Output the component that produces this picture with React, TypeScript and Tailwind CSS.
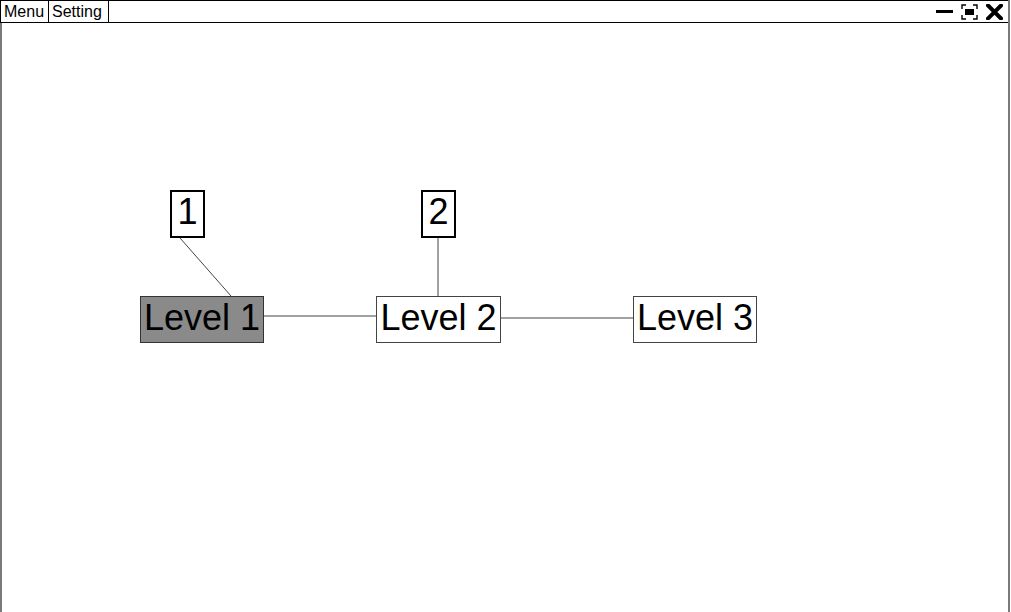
import React from 'react';

type Node = { id: string; label: string; x: number; y: number; w: number; h: number; active?: boolean };

const nodes: Node[] = [
  { id: 'n1', label: '1', x: 170, y: 190, w: 35, h: 48 },
  { id: 'n2', label: '2', x: 421, y: 190, w: 35, h: 48 },
  { id: 'l1', label: 'Level 1', x: 140, y: 296, w: 124, h: 47, active: true },
  { id: 'l2', label: 'Level 2', x: 376, y: 296, w: 125, h: 47 },
  { id: 'l3', label: 'Level 3', x: 633, y: 296, w: 124, h: 47 },
];

const edges = [
  { x1: 264, y1: 316, x2: 376, y2: 316 },
  { x1: 501, y1: 318, x2: 633, y2: 318 },
  { x1: 180, y1: 238, x2: 231, y2: 296 },
  { x1: 438, y1: 238, x2: 438, y2: 296 },
];

const WindowControls = () => (
  <div className="flex items-center gap-[8px] pr-[5px] h-full">
    <svg width="17" height="16" viewBox="0 0 17 16">
      <rect x="0" y="6" width="17" height="3" fill="#000" />
    </svg>
    <svg width="17" height="16" viewBox="0 0 17 16">
      <path d="M1 5V1h4M12 1h4v4M16 11v4h-4M5 15H1v-4" stroke="#000" strokeWidth="1.4" fill="none" />
      <rect x="4" y="5" width="9" height="6" fill="#000" />
    </svg>
    <svg width="17" height="16" viewBox="0 0 17 16">
      <path d="M2 1.5L15 14.5M15 1.5L2 14.5" stroke="#000" strokeWidth="4" strokeLinecap="square" />
    </svg>
  </div>
);

export default function App() {
  return (
    <div className="w-[1011px] h-[612px] bg-white overflow-hidden" style={{ fontFamily: '"Liberation Sans", Arial, sans-serif' }}>
      <div className="w-[1010px] h-full flex flex-col border-r-2 border-[#7a7a7a]">
        {/* title bar */}
        <div className="h-[23px] flex items-stretch justify-between border-t border-b border-black bg-white">
          <div className="flex items-stretch">
            <button className="pl-[3px] pr-[4px] border-l border-r border-black text-[16px] leading-[20px] text-black">Menu</button>
            <button className="pl-[3px] pr-[6px] border-r border-black text-[16px] leading-[20px] text-black">Setting</button>
          </div>
          <WindowControls />
        </div>

        {/* canvas */}
        <div className="relative flex-1 border-l-2 border-[#7a7a7a]">
          <svg className="absolute top-[-23px] left-[-2px]" width="1011" height="612">
            {edges.map((e, i) => (
              <line key={i} x1={e.x1} y1={e.y1} x2={e.x2} y2={e.y2} stroke="#444" strokeWidth="1" />
            ))}
          </svg>
          {nodes.map(n => (
            <div
              key={n.id}
              className={`absolute flex items-center justify-center pb-[4px] text-[36px] leading-none text-black ${
                n.active ? 'bg-[#8a8a8a] border border-[#333]' : 'bg-white border border-[#444]'
              } ${n.label.length === 1 ? 'border-2 border-black' : ''}`}
              style={{ left: n.x - 2, top: n.y - 23, width: n.w, height: n.h }}
            >
              {n.label}
            </div>
          ))}
        </div>
      </div>
    </div>
  );
}
